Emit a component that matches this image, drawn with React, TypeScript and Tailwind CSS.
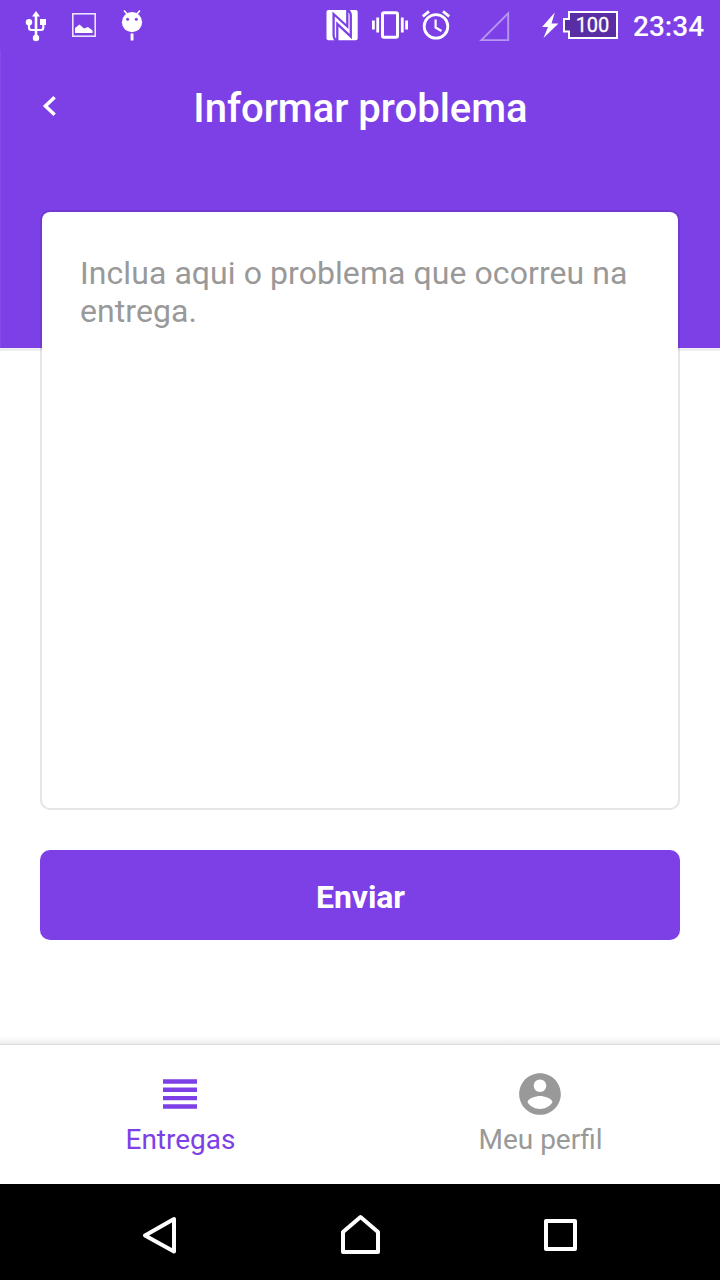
import React from "react";

function StatusBar() {
  return (
    <div className="flex h-[50px] shrink-0 items-start text-white">
      <svg className="ml-6 h-[50px] w-6 shrink-0" viewBox="24 0 24 50" fill="none">
        <path d="M36 15V36" stroke="currentColor" strokeWidth="2.6" />
        <path d="M36 11L40 16.5H32Z" fill="currentColor" />
        <path d="M29 22V27.5Q29 30 31.5 30H41Q43.3 30 43.3 27.500V23" stroke="currentColor" strokeWidth="2.2" />
        <circle cx="29" cy="22.2" r="3.2" fill="currentColor" />
        <path d="M40 19H46V25H40Z" fill="currentColor" />
        <circle cx="36" cy="38" r="3.2" fill="currentColor" />
      </svg>
      <svg className="ml-6 h-[50px] w-6 shrink-0" viewBox="72 0 24 50" fill="none">
        <rect x="72.800" y="13.800" width="22.400" height="22.400" stroke="currentColor" strokeWidth="1.600" opacity=".85" />
        <path d="M75 33V28L79.500 24.500L84 28.500L88 27L92.500 30.500V33Z" fill="currentColor" />
      </svg>
      <svg className="ml-6 h-[50px] w-6 shrink-0" viewBox="120 0 24 50" fill="none">
        <path d="M124 10.500L128 15M140 10.500L136 15" stroke="currentColor" strokeWidth="1.600" />
        <circle cx="132" cy="22.200" r="10.100" fill="currentColor" />
        <circle cx="127.600" cy="19.300" r="1.500" fill="#7d40e7" />
        <circle cx="136.300" cy="19.300" r="1.500" fill="#7d40e7" />
        <path d="M130.600 33.500H133.500V40.500H130.600Z" fill="currentColor" />
      </svg>

      <svg className="ml-[182px] h-[50px] w-8 shrink-0" viewBox="326 0 32 50" fill="none">
        <rect x="326.500" y="10" width="31.200" height="30.300" rx="2" fill="currentColor" />
        <path d="M337.500 41Q333.600 39.500 333.600 35V14L347.300 26.500V9.500M337.300 41V24L350.800 36.500V16Q350.800 11.500 347 9.500" stroke="#7d40e7" strokeWidth="2.300" />
      </svg>
      <svg className="ml-[14px] h-[50px] w-9 shrink-0" viewBox="372 0 36 50" fill="none">
        <rect x="382.500" y="12.800" width="15" height="24.500" rx="1.500" stroke="currentColor" strokeWidth="3" />
        <path d="M377.700 17.500V32.500M402.300 17.500V32.500M373.400 20.500V29.500M406.600 20.500V29.500" stroke="currentColor" strokeWidth="2.800" />
      </svg>
      <svg className="ml-[14px] h-[50px] w-7 shrink-0" viewBox="422 0 28 50" fill="none">
        <circle cx="436" cy="26.400" r="11.800" stroke="currentColor" strokeWidth="2.800" />
        <path d="M422.800 16.500L429 11.400M443 11.400L449.200 16.500" stroke="currentColor" strokeWidth="2.800" />
        <path d="M435.600 19.500V27.500L441.500 31" stroke="currentColor" strokeWidth="2.200" />
      </svg>
      <svg className="ml-[29px] h-[50px] w-[31px] shrink-0" viewBox="479 0 31 50" fill="none">
        <path d="M481.400 40.100H508.200V13.300Z" stroke="white" strokeWidth="1.900" opacity=".45" />
      </svg>
      <svg className="ml-[31px] h-[50px] w-[18px] shrink-0" viewBox="541 0 18 50">
        <path d="M554.800 12.500L542 27H548L543.500 38L558.500 23.500H551.500Z" fill="currentColor" />
      </svg>
      <svg className="ml-[4px] h-[50px] w-[55px] shrink-0" viewBox="563 0 55 50">
        <path d="M569 12H617V38H569V31.500H564V19H569Z" fill="#592ea5" stroke="currentColor" strokeWidth="2" />
        <text x="592.500" y="32.200" textAnchor="middle" fill="currentColor" stroke="currentColor" strokeWidth="0.300" className="font-[Roboto] text-[20px] font-normal">100</text>
      </svg>
      <span className="ml-[15px] mt-[10px] font-medium text-[28px] leading-[33px]">23:34</span>
    </div>
  );
}

function Tab({ label, className, children }: { label: string; className: string; children: React.ReactNode }) {
  return (
    <button className={`flex flex-1 flex-col items-center pt-6 ${className}`}>
      {children}
      <span className="mt-1 pl-px text-[28px] leading-[33px]">{label}</span>
    </button>
  );
}

export default function App() {
  return (
    <div className="flex h-[1280px] w-[720px] flex-col overflow-hidden bg-white font-[Roboto,sans-serif]">
      <header className="h-[348px] shrink-0 bg-[#7d40e7] text-white">
        <StatusBar />
        <div className="flex h-[298px] items-start border-l border-[#854be9] pt-[35px]">
          <button className="ml-[39px] mt-[5px] flex w-8 shrink-0" aria-label="Voltar">
            <svg className="h-8 w-5" viewBox="40 90 20 32" fill="none">
              <path d="M54.600 97.200L45.400 106L54.600 114.800" stroke="currentColor" strokeWidth="3.500" />
            </svg>
          </button>
          <h1 className="mr-[71px] flex-1 text-center text-[40px] font-medium leading-[47px]">Informar problema</h1>
        </div>
      </header>
      <div className="h-[3px] shrink-0 bg-[#eeeeee]" />

      <main className="-mt-[141px] flex flex-1 flex-col px-10">
        <textarea
          className="block h-[600px] w-full shrink-0 resize-none overflow-hidden rounded-[10px] border-2 border-black/10 bg-white bg-clip-padding px-[38px] pt-[42px] text-[32px] leading-[38px] tracking-[0.07px] outline-none placeholder:text-[#999999]"
          placeholder="Inclua aqui o problema que ocorreu na entrega."
        />
        <button className="mt-10 h-[90px] shrink-0 rounded-[10px] bg-[#7d40e7] pl-px pt-[3px] text-[32px] font-bold tracking-[-0.1px] text-white">Enviar</button>
      </main>

      <div className="h-2 shrink-0 bg-linear-to-b from-white to-[#eeeeee]" />
      <nav className="flex h-[140px] shrink-0 border-t border-[#dddddd] bg-white">
        <Tab label="Entregas" className="text-[#7d40e7]">
          <svg className="h-[50px] w-[50px]" viewBox="155 1069 50 50">
            <path d="M163 1079.300H197V1083.700H163ZM163 1087.500H197V1092H163ZM163 1096H197V1100.300H163ZM163 1104.300H197V1108.800H163Z" fill="currentColor" />
          </svg>
        </Tab>
        <Tab label="Meu perfil" className="text-[#999999]">
          <svg className="h-[50px] w-[50px]" viewBox="0 0 24 24">
            <path d="M12 2C6.480 2 2 6.480 2 12s4.480 10 10 10 10-4.480 10-10S17.520 2 12 2zm0 3c1.660 0 3 1.340 3 3s-1.340 3-3 3-3-1.340-3-3 1.340-3 3-3zm0 14.200c-2.500 0-4.710-1.280-6-3.220.030-1.990 4-3.080 6-3.080 1.990 0 5.970 1.090 6 3.080-1.290 1.940-3.500 3.220-6 3.220z" fill="currentColor" />
          </svg>
        </Tab>
      </nav>

      <footer className="flex h-24 shrink-0 bg-black text-white">
        <svg className="ml-[140px] h-24 w-10" viewBox="140 1184 40 96" fill="none">
          <path d="M174 1219V1251.500L145 1235.500Z" stroke="currentColor" strokeWidth="4" strokeLinejoin="round" />
        </svg>
        <svg className="ml-40 h-24 w-10" viewBox="340 1184 40 96" fill="none">
          <path d="M343 1252H378V1232L360.500 1217L343 1232Z" stroke="currentColor" strokeWidth="4" strokeLinejoin="round" />
        </svg>
        <svg className="ml-40 h-24 w-10" viewBox="540 1184 40 96" fill="none">
          <rect x="546" y="1221" width="29" height="28" stroke="currentColor" strokeWidth="4" strokeLinejoin="round" />
        </svg>
      </footer>
    </div>
  );
}
